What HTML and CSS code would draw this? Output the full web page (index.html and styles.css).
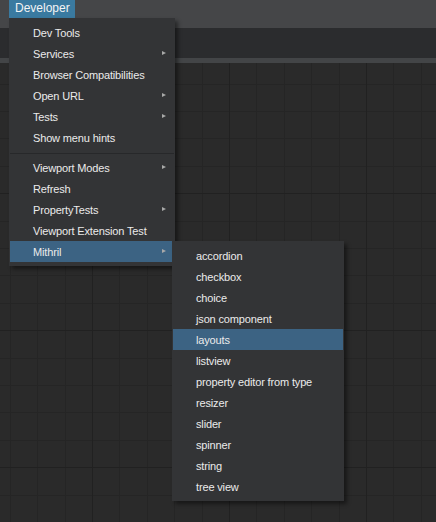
FILE: index.html
```html
<!DOCTYPE html>
<html>
<head>
<meta charset="utf-8">
<link rel="stylesheet" href="styles.css">
</head>
<body>
<div class="app">
  <div class="topbar">
    <div class="topbtn">Developer</div>
  </div>
  <div class="band"></div>
  <div class="strip"></div>
  <div class="canvas"></div>

  <div class="menu main-menu">
    <div class="item">Dev Tools</div>
    <div class="item sub">Services</div>
    <div class="item">Browser Compatibilities</div>
    <div class="item sub">Open URL</div>
    <div class="item sub">Tests</div>
    <div class="item">Show menu hints</div>
    <div class="sep"></div>
    <div class="item sub">Viewport Modes</div>
    <div class="item">Refresh</div>
    <div class="item sub">PropertyTests</div>
    <div class="item">Viewport Extension Test</div>
    <div class="item sub active">Mithril</div>
  </div>

  <div class="menu sub-menu">
    <div class="item">accordion</div>
    <div class="item">checkbox</div>
    <div class="item">choice</div>
    <div class="item">json component</div>
    <div class="item active">layouts</div>
    <div class="item">listview</div>
    <div class="item">property editor from type</div>
    <div class="item">resizer</div>
    <div class="item">slider</div>
    <div class="item">spinner</div>
    <div class="item">string</div>
    <div class="item">tree view</div>
  </div>
</div>
</body>
</html>
```

FILE: styles.css
```css
html, body {
  margin: 0;
  padding: 0;
  height: 100%;
}
body {
  background: #2a2a2a;
  font-family: "Liberation Sans", Arial, sans-serif;
  overflow: hidden;
}
.app {
  position: relative;
  display: flex;
  flex-direction: column;
  width: 436px;
  height: 522px;
}
.topbar {
  height: 28px;
  background: #454648;
  display: flex;
  align-items: flex-start;
  padding-left: 9px;
  box-sizing: border-box;
}
.topbtn {
  height: 18px;
  line-height: 17px;
  padding: 0 5px 0 6px;
  background: #3a7aa0;
  color: #f4f4f4;
  font-size: 12px;
}
.band {
  height: 30px;
  background: #2b2c2e;
}
.strip {
  height: 5px;
  background: #434547;
}
.canvas {
  flex: 1;
  background-color: #2a2a2a;
  background-image:
    repeating-linear-gradient(to right, transparent 0 92px, #212121 92px 93px, transparent 93px 137px),
    repeating-linear-gradient(to bottom, transparent 0 130px, #212121 130px 131px, transparent 131px 137px),
    repeating-linear-gradient(to right, transparent 0 9.8px, #252525 9.8px 10.8px, transparent 10.8px 27.4px),
    repeating-linear-gradient(to bottom, transparent 0 20.6px, #252525 20.6px 21.6px, transparent 21.6px 27.4px);
}
.menu {
  position: absolute;
  background: #333436;
  padding: 4px 1px;
  box-shadow: 3px 3px 4px rgba(0, 0, 0, 0.45);
  color: #ebebeb;
  font-size: 11px;
  letter-spacing: -0.15px;
}
.main-menu {
  left: 9px;
  top: 18px;
  width: 164px;
}
.sub-menu {
  left: 172px;
  top: 241px;
  width: 170px;
}
.item {
  position: relative;
  height: 21px;
  line-height: 23px;
  padding-left: 23px;
  white-space: nowrap;
}
.item.active {
  background: #3c6383;
}
.item.sub::after {
  content: "";
  position: absolute;
  right: 8px;
  top: 8px;
  border-left: 4px solid #a8a8a8;
  border-top: 2.5px solid transparent;
  border-bottom: 2.5px solid transparent;
}
.sep {
  height: 1px;
  background: #27282a;
  margin: 5px 0 3px;
}
```
